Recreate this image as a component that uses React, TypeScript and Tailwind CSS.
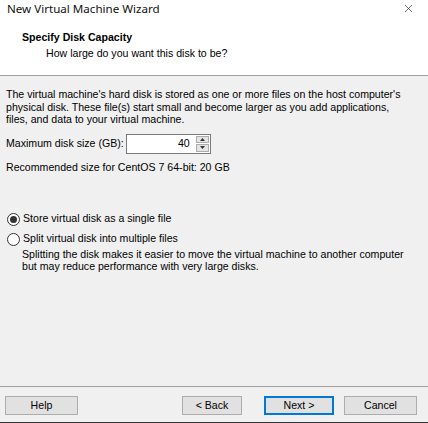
import { X } from 'lucide-react'

const body = { fontFamily: '"Liberation Sans", Arial, sans-serif' }

function Radio({ checked, label }: { checked?: boolean; label: string }) {
  return (
    <label className="flex items-center h-[18px] gap-[3px] pl-[7px]">
      <span className="w-[13px] h-[13px] rounded-full border border-[#333333] bg-white flex items-center justify-center">
        {checked && <span className="w-[7px] h-[7px] rounded-full bg-[#333333]" />}
      </span>
      <span>{label}</span>
    </label>
  )
}

function Button({ label, primary, w }: { label: string; primary?: boolean; w: string }) {
  return (
    <button
      className={
        w +
        ' h-[19px] bg-[#e1e1e1] text-black leading-none ' +
        (primary ? 'border-2 border-[#0078d7]' : 'border border-[#adadad]')
      }
    >
      {label}
    </button>
  )
}

export default function App() {
  return (
    <div
      className="w-[428px] h-[423px] bg-[#f0f0f0] flex flex-col text-[10.6px] text-black border-b border-[#333333]"
      style={body}
    >
      {/* Header */}
      <div className="h-[76px] bg-white border-b border-[#a0a0a0] flex flex-col">
        <div className="flex items-center justify-between h-[17px] pl-[7px] pr-[13px]">
          <span className="text-[11.6px] text-[#111]" style={{ fontFamily: '"Noto Sans", "Open Sans", sans-serif' }}>
            New Virtual Machine Wizard
          </span>
          <X className="w-[13px] h-[13px] text-[#222]" strokeWidth={1.2} />
        </div>
        <div className="pl-[22px] mt-[14px] font-bold leading-[13px]">Specify Disk Capacity</div>
        <div className="pl-[46px] mt-[3px] leading-[13px]">How large do you want this disk to be?</div>
      </div>

      {/* Body */}
      <div className="px-[6px] pt-[12px] leading-[12.5px]">
        <p>
          The virtual machine's hard disk is stored as one or more files on the host computer's
          <br />
          physical disk. These file(s) start small and become larger as you add applications,
          <br />
          files, and data to your virtual machine.
        </p>

        <div className="flex items-center gap-[2px] mt-[8px]">
          <span>Maximum disk size (GB):</span>
          <div className="flex items-stretch h-[20px] w-[85px] border border-[#7a7a7a] bg-white">
            <div className="flex-1 flex items-center justify-end pr-[5px]">40</div>
            <div className="w-[15px] flex flex-col gap-px p-px">
              <div className="flex-1 bg-[#e5e5e5] border border-[#acacac] flex items-center justify-center">
                <svg width="5" height="3" viewBox="0 0 5 3"><path d="M0 3L2.5 0L5 3Z" fill="#333" /></svg>
              </div>
              <div className="flex-1 bg-[#e5e5e5] border border-[#acacac] flex items-center justify-center">
                <svg width="5" height="3" viewBox="0 0 5 3"><path d="M0 0L2.5 3L5 0Z" fill="#333" /></svg>
              </div>
            </div>
          </div>
        </div>

        <p className="mt-[7px]">Recommended size for CentOS 7 64-bit: 20 GB</p>
      </div>

      <div className="mt-[37px] flex flex-col gap-[2px]">
        <Radio checked label="Store virtual disk as a single file" />
        <Radio label="Split virtual disk into multiple files" />
      </div>
      <p className="pl-[22px] leading-[12px]">
        Splitting the disk makes it easier to move the virtual machine to another computer
        <br />
        but may reduce performance with very large disks.
      </p>

      <div className="flex-1" />

      {/* Footer */}
      <div className="border-t border-[#a0a0a0] h-[36px] flex items-center pl-[5px] pr-[11px] pb-[6px] pt-[8px]">
        <Button label="Help" w="w-[73px]" />
        <div className="flex-1" />
        <Button label="< Back" w="w-[60px]" />
        <div className="w-[22px]" />
        <Button label="Next >" primary w="w-[70px]" />
        <div className="w-[10px]" />
        <Button label="Cancel" w="w-[73px]" />
      </div>
    </div>
  )
}
